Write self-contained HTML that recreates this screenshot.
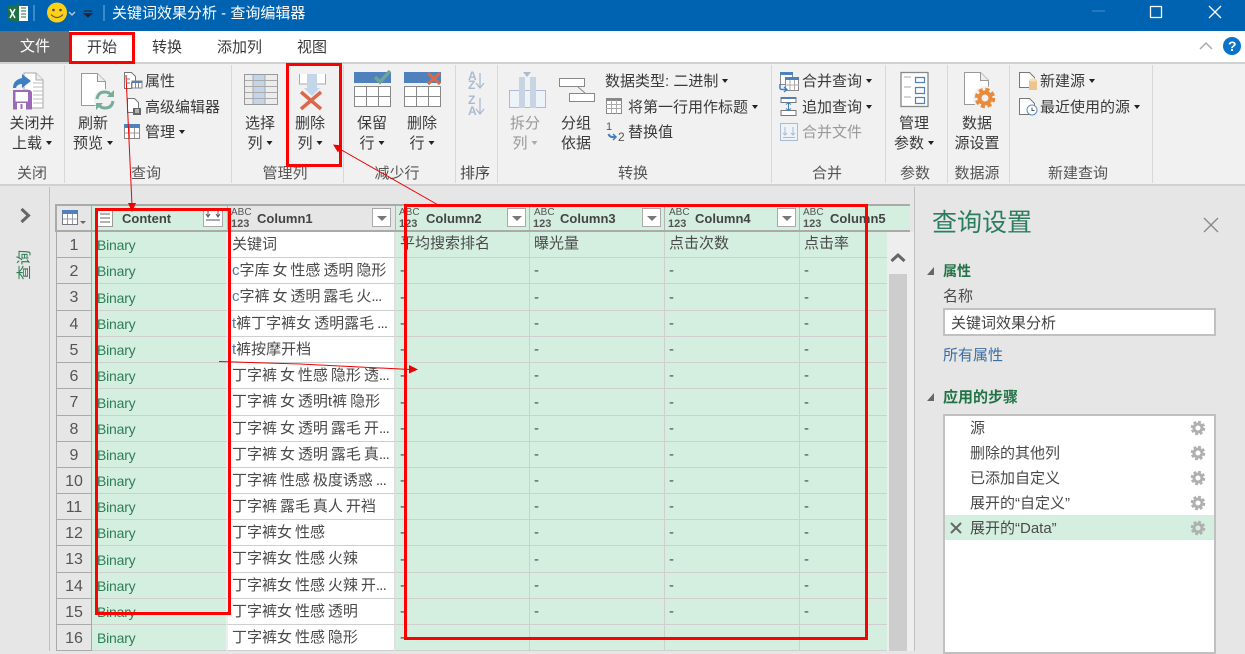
<!DOCTYPE html>
<html lang="zh"><head><meta charset="utf-8"><title>关键词效果分析 - 查询编辑器</title>
<style>
*{box-sizing:border-box}
html,body{margin:0;padding:0}
body{width:1245px;height:651px;overflow:hidden;position:relative;background:#e6e6e6;font-family:"Liberation Sans","Noto Sans CJK SC",sans-serif;font-size:15px;color:#444}
.a{position:absolute}
.t{position:absolute;line-height:20px;white-space:nowrap;color:#3a3a3a}
.c{transform:translateX(-50%)}
.t.g{color:#999}
.k{display:inline-block;width:0;height:0;border:3.5px solid transparent;border-top:4px solid #222;border-bottom:0;margin-left:4px;vertical-align:3px}
.g .k{border-top-color:#aaa}
table{position:absolute;left:56px;top:232px;width:831px;border-collapse:separate;border-spacing:0;table-layout:fixed;font-family:"Liberation Sans","Noto Sans CJK SC",sans-serif}
td{height:26px;padding:1px 0 0 4px;border-bottom:1px solid #cfcfcf;border-right:1px solid #cfcfcf;background:#d4efe0;white-space:nowrap;overflow:hidden;font-size:15px;color:#4a4a4a;line-height:20px}
tr.h td{height:27px}
td:nth-child(1){background:#e6e6e6;border:1px solid #aaa;border-top:0;text-align:center;padding:2px 0 0;color:#555;font-size:16px}
td:nth-child(2){color:#2f7d57;font-size:14px;letter-spacing:-.2px;padding:1px 0 0 5px;border-right:2px solid #eee}
td:nth-child(3){background:#fff;border-right:2px solid #e0e0e0;word-spacing:-1.2px;padding-top:0}
td:nth-child(7){border-right:0}
tr:first-child td:nth-child(n+4){padding-top:0;padding-bottom:2px}
i.e{font-style:normal;letter-spacing:-.8px}
b.b{font-weight:normal;color:#5577aa}
.hd{position:absolute;font:bold 13px "Liberation Sans",sans-serif;color:#444;top:211px;line-height:15px}
.abc{position:absolute;font:10px/10px "Liberation Sans",sans-serif;color:#555;top:208px}
.n123{position:absolute;font:bold 11px/11px "Liberation Sans",sans-serif;color:#555;top:219px}
.fb{position:absolute;top:208px;width:19px;height:19px;background:#fff;border:1px solid #aaa}
.fb:after{content:"";position:absolute;left:4px;top:7px;border:5px solid transparent;border-top:5px solid #777;border-bottom:0}
.sr{position:absolute;left:970px;line-height:20px;color:#4a4a4a;font-size:15px;white-space:nowrap}
</style></head><body>

<div class="a" style="left:0;top:0;width:1245px;height:31px;background:#0063b1"></div>
<div class="a" style="left:0;top:31px;width:1245px;height:31px;background:#fff"></div>
<div class="a" style="left:0;top:31px;width:69px;height:31px;background:#6d6d6d"></div>
<div class="a" style="left:0;top:62px;width:1245px;height:124px;background:#f1f1f1;border-top:2px solid #d0d0d0;border-bottom:2px solid #d0d0d0"></div>

<svg class="a" style="left:0;top:0" width="1245" height="651" viewBox="0 0 1245 651">
<defs>
<g id="gear"><circle r="4" fill="none" stroke="#b0b0b0" stroke-width="3"/><circle r="6" fill="none" stroke="#b0b0b0" stroke-width="2.6" stroke-dasharray="2.8 1.9"/></g>
</defs>
<!-- title bar -->
<path d="M8 6l12-2v18l-12-2z" fill="#1e7145"/><path d="M19 6h9v15h-9z" fill="#fff"/><path d="M21 8h5M21 11h5M21 14h5M21 17h5" stroke="#1e7145"/>
<path d="M10 9l5 9M15 9l-5 9" stroke="#fff" stroke-width="1.5"/>
<path d="M34 5v16M104 5v16" stroke="#7fb0d8"/>
<circle cx="57" cy="12.500" r="10" fill="#fcd116"/>
<circle cx="53.500" cy="10" r="1.300" fill="#544"/><circle cx="60.500" cy="10" r="1.300" fill="#544"/>
<path d="M51 14.500q6 6 12 0" fill="none" stroke="#654" stroke-width="1.200"/>
<path d="M69 12l3 3 3-3" fill="none" stroke="#bcd" stroke-width="1.300"/>
<path d="M84 11h8M84 13.500l4 3.500 4-3.500z" fill="#223" stroke="#223"/>
<path d="M1092 11h13" stroke="#4a8cc6"/>
<rect x="1150.500" y="6.500" width="11" height="11" fill="none" stroke="#fff" stroke-width="1.300"/>
<path d="M1209 6l12 12M1221 6l-12 12" stroke="#fff" stroke-width="1.300"/>
<path d="M1200 49l6-6 6 6" fill="none" stroke="#aaa" stroke-width="1.500"/>
<circle cx="1232" cy="46" r="9" fill="#0a72c9"/>

<!-- ribbon separators -->
<path d="M64.500 65v118M231.500 65v118M343.500 65v118M455.500 65v118M497.500 65v118M771.500 65v118M885.500 65v118M947.500 65v118M1009.500 65v118M1152.500 65v118" stroke="#d8d8d8"/>

<!-- close load -->
<path d="M24 73h12l7 7v28H28V90h-4z" fill="#fff" stroke="#aaa"/><path d="M36 73v7h7" fill="#eee" stroke="#aaa"/>
<path d="M33 83h10M33 87h10M33 91h10M33 95h10M33 99h10M33 103h10" stroke="#bbb"/>
<path d="M13 88q0-8 9-10v-4l9 7-9 7v-4q-5 0-6 4z" fill="#3f7fc1"/>
<path d="M13 90h17l2 2v17.500H13z" fill="#9a69b8"/><rect x="15.500" y="92" width="12.500" height="9.500" fill="#fff"/><rect x="17" y="103" width="9" height="6.500" fill="#fff"/><rect x="20.500" y="104" width="2" height="5" fill="#9a69b8"/>
<!-- refresh -->
<path d="M81.500 73.500h16l8 8v24h-24z" fill="#fff" stroke="#999"/><path d="M97.500 73.500v8h8" fill="#eee" stroke="#999"/>
<circle cx="105" cy="100" r="11" fill="#f1f1f1"/>
<path d="M97 99q1-7 8-7 4 0 6 3M113 101q-1 7-8 7-4 0-6-3" fill="none" stroke="#78ad9a" stroke-width="3"/>
<path d="M114 90v7h-7zM96 110v-7h7z" fill="#78ad9a"/>
<!-- props -->
<path d="M124.500 72.500h7l4 4v6h-4v6h-7z" fill="#fff" stroke="#777"/>
<path d="M127 79h3M127 83h3" stroke="#777"/>
<rect x="132" y="81" width="10" height="7" fill="#fff" stroke="#888"/><path d="M132 81h10v2h-10z" fill="#4f81bd"/><path d="M135.500 83v5M138.500 83v5" stroke="#888"/>
<path d="M127.500 98.500h7l4 4v10h-11z" fill="#fff" stroke="#777"/><rect x="133" y="108" width="8" height="7" fill="#666"/><path d="M135 110h4M135 112h4" stroke="#fff"/>
<rect x="124.500" y="124.500" width="15" height="14" fill="#fff" stroke="#888"/><rect x="124" y="124" width="16" height="4" fill="#4f81bd"/><path d="M129.500 128v10M134.500 128v10M125 133h14" stroke="#999"/>
<!-- select cols -->
<rect x="244.500" y="74.500" width="33" height="30" fill="#ececec" stroke="#999"/><rect x="253" y="75" width="12" height="29" fill="#c3d5e8"/>
<path d="M245 80.500h32M245 86.500h32M245 92.500h32M245 98.500h32M253 75v29M265 75v29" stroke="#aaa"/>
<!-- delete col -->
<path d="M299.500 74v10h26V74" fill="#fff" stroke="#aaa"/><path d="M307 74h10v16h-10z" fill="#c3d5e8"/><path d="M304 88h16l-8 8z" fill="#c3d5e8"/>
<path d="M301 92l20 17M321 92l-20 17" stroke="#d9694a" stroke-width="3.500"/>
<!-- keep rows -->
<rect x="354" y="72" width="37" height="11" fill="#4f81bd"/><rect x="354.500" y="86.500" width="36" height="20" fill="#fff" stroke="#888"/>
<path d="M354 96.500h37M366.500 86v21M378.500 86v21" stroke="#888"/>
<path d="M375 77l5 5 10-11" fill="none" stroke="#6fa397" stroke-width="3.500"/>
<!-- delete rows -->
<rect x="404" y="72" width="37" height="11" fill="#4f81bd"/><rect x="404.500" y="86.500" width="36" height="20" fill="#fff" stroke="#888"/>
<path d="M404 96.500h37M416.500 86v21M428.500 86v21" stroke="#888"/>
<path d="M428 73l12 11M440 73l-12 11" stroke="#d9694a" stroke-width="3"/>
<!-- split -->
<path d="M509.500 90.500v17h36v-17z" fill="#eef3fa" stroke="#a9bbd1"/><rect x="519" y="77" width="6" height="31" fill="#c8d4e4"/><rect x="530" y="77" width="6" height="31" fill="#c8d4e4"/><path d="M523 72h8l-4 5z" fill="#a9bbd1"/>
<!-- group -->
<rect x="559.500" y="78.500" width="25" height="8" fill="#fff" stroke="#888"/><rect x="569.500" y="93.500" width="25" height="8" fill="#fff" stroke="#888"/><path d="M578 87l7 6" stroke="#888"/>
<!-- first row -->
<rect x="606.500" y="98.500" width="15" height="15" fill="#fff" stroke="#888"/><rect x="606" y="98" width="16" height="3" fill="#888"/>
<path d="M606 104.500h16M606 108.500h16M611.500 100v14M616.500 100v14" stroke="#aaa"/>
<path d="M608.500 134q1 3 4 3h3" fill="none" stroke="#3f7fc1" stroke-width="2"/><path d="M613 134l3 3-3 3" fill="none" stroke="#3f7fc1" stroke-width="1.500"/>
<!-- merge -->
<rect x="780.500" y="72.500" width="12" height="12" fill="#fff" stroke="#888"/><rect x="780" y="72" width="13" height="3" fill="#4f81bd"/>
<rect x="785.500" y="78.500" width="13" height="12" fill="#fff" stroke="#888"/><rect x="785" y="77" width="14" height="3" fill="#4f81bd"/><path d="M790 80v10M794.500 80v10M785 85h14" stroke="#aaa"/>
<path d="M780 84v4q0 1.500 3 1.500h3" fill="none" stroke="#3f7fc1" stroke-width="1.500"/><path d="M784 87l3 2.500-3 2.500" fill="none" stroke="#3f7fc1" stroke-width="1.300"/>
<path d="M781 97.500h15v5h-15zM781 110.500h15v5h-15z" fill="#fff" stroke="#777"/><path d="M781 97h15v2h-15z" fill="#4f81bd"/><path d="M788.500 103v7M786 104.500l2.500-2 2.500 2M786 108.500l2.500 2 2.500-2" fill="none" stroke="#3f7fc1"/>
<rect x="780.500" y="123.500" width="17" height="17" fill="#eef3fa" stroke="#a9bbd1"/><path d="M785 127v8M783 133l2 2 2-2M793 127v8M791 133l2 2 2-2M783 137.500h12" fill="none" stroke="#a9bbd1"/>
<!-- params -->
<rect x="901" y="72.500" width="27" height="34" fill="#fff" stroke="#888" stroke-width="1.300"/>
<path d="M904 77h7M904 87h7M904 97h7" stroke="#aaa"/>
<path d="M915.500 77.500h9v5h-9zM915.500 87.500h9v6h-9zM915.500 97.500h9v6h-9z" fill="#fff" stroke="#4f81bd" stroke-width="1.200"/>
<!-- data source -->
<path d="M964.500 72.500h16l8 8v24h-24z" fill="#fff" stroke="#999"/><path d="M980.500 72.500v8h8" fill="#eee" stroke="#999"/>
<circle cx="985" cy="98" r="12" fill="#f1f1f1"/>
<circle cx="985" cy="98" r="5.500" fill="none" stroke="#e88a3a" stroke-width="4"/><circle cx="985" cy="98" r="8.500" fill="none" stroke="#e88a3a" stroke-width="3.500" stroke-dasharray="4 2.700"/>
<!-- new src -->
<path d="M1019.500 72.500h10l5 5v10h-15z" fill="#fff" stroke="#777"/>
<rect x="1029" y="80" width="8" height="10" fill="#e8c68e"/><ellipse cx="1033" cy="80" rx="4" ry="1.800" fill="#f4dfb8"/>
<path d="M1019.500 98.500h10l5 5v11h-15z" fill="#fff" stroke="#777"/>
<circle cx="1032" cy="110" r="5" fill="#fff" stroke="#5a8fc4"/><path d="M1032 107.500v3h2.500" fill="none" stroke="#555"/>

<!-- left panel -->
<path d="M49.500 187v464" stroke="#c0c0c0"/>
<path d="M21.500 209l7 6.500-7 6.500" fill="none" stroke="#666" stroke-width="3"/>
<!-- right panel border -->
<path d="M914.500 187v464" stroke="#c0c0c0"/>
<path d="M1204 218l14 14M1218 218l-14 14" stroke="#888" stroke-width="1.300"/>
<path d="M934 267v8h-7z" fill="#666"/><path d="M934 393v8h-7z" fill="#666"/>
</svg>

<div class="t" style="left:112px;top:4px;color:#fff">关键词效果分析 - 查询编辑器</div>
<div class="t" style="left:20px;top:37px;color:#fff">文件</div>
<div class="t" style="left:87px;top:38px">开始</div>
<div class="t" style="left:152px;top:38px">转换</div>
<div class="t" style="left:217px;top:38px">添加列</div>
<div class="t" style="left:297px;top:38px">视图</div>
<div class="t" style="left:1228px;top:36px;color:#fff;font-weight:bold;font-size:14px">?</div>

<div class="t c" style="left:32px;top:114px">关闭并</div><div class="t c" style="left:32px;top:134px">上载<i class="k"></i></div><div class="t c" style="left:32px;top:164px;color:#555">关闭</div>
<div class="t c" style="left:93px;top:114px">刷新</div><div class="t c" style="left:93px;top:134px">预览<i class="k"></i></div>
<div class="t" style="left:145px;top:72px">属性</div><div class="t" style="left:145px;top:98px">高级编辑器</div><div class="t" style="left:145px;top:123px">管理<i class="k"></i></div><div class="t c" style="left:146px;top:164px;color:#555">查询</div>
<div class="t c" style="left:260px;top:114px">选择</div><div class="t c" style="left:260px;top:134px">列<i class="k"></i></div><div class="t c" style="left:285px;top:164px;color:#555">管理列</div>
<div class="t c" style="left:310px;top:114px">删除</div><div class="t c" style="left:310px;top:134px">列<i class="k"></i></div>
<div class="t c" style="left:372px;top:114px">保留</div><div class="t c" style="left:372px;top:134px">行<i class="k"></i></div>
<div class="t c" style="left:422px;top:114px">删除</div><div class="t c" style="left:422px;top:134px">行<i class="k"></i></div><div class="t c" style="left:397px;top:164px;color:#555">减少行</div>
<div class="t" style="left:468px;top:72px;font:bold 12px/9px 'Liberation Sans',sans-serif;color:#a9bbd1;white-space:normal;width:10px">A<br>Z</div>
<div class="t" style="left:468px;top:95px;font:bold 12px/11px 'Liberation Sans',sans-serif;color:#a9bbd1;white-space:normal;width:10px">Z<br>A</div>
<svg class="a" style="left:474px;top:70px" width="12" height="46"><path d="M6 3v15M2 13l4 5 4-5M6 28v16M2 39l4 5 4-5" fill="none" stroke="#a9bbd1" stroke-width="1.300"/></svg>
<div class="t c" style="left:475px;top:164px;color:#444">排序</div>
<div class="t c g" style="left:525px;top:114px">拆分</div><div class="t c g" style="left:525px;top:134px">列<i class="k"></i></div>
<div class="t c" style="left:576px;top:114px">分组</div><div class="t c" style="left:576px;top:134px">依据</div>
<div class="t" style="left:605px;top:72px">数据类型: 二进制<i class="k"></i></div>
<div class="t" style="left:628px;top:98px">将第一行用作标题<i class="k"></i></div>
<div class="t" style="left:628px;top:123px">替换值</div>
<div class="t" style="left:606px;top:120px;font-size:11px;line-height:14px;color:#555">1</div><div class="t" style="left:618px;top:130px;font-size:12px;line-height:14px;color:#555">2</div>
<div class="t c" style="left:633px;top:164px;color:#555">转换</div>
<div class="t" style="left:802px;top:72px">合并查询<i class="k"></i></div><div class="t" style="left:802px;top:98px">追加查询<i class="k"></i></div><div class="t g" style="left:802px;top:123px">合并文件</div><div class="t c" style="left:827px;top:164px;color:#555">合并</div>
<div class="t c" style="left:914px;top:114px">管理</div><div class="t c" style="left:914px;top:134px">参数<i class="k"></i></div><div class="t c" style="left:915px;top:164px;color:#555">参数</div>
<div class="t c" style="left:977px;top:114px">数据</div><div class="t c" style="left:977px;top:134px">源设置</div><div class="t c" style="left:977px;top:164px;color:#555">数据源</div>
<div class="t" style="left:1040px;top:72px">新建源<i class="k"></i></div><div class="t" style="left:1040px;top:98px">最近使用的源<i class="k"></i></div><div class="t c" style="left:1078px;top:164px;color:#555">新建查询</div>

<div class="t" style="left:10px;top:255px;width:30px;height:20px;text-align:center;transform:rotate(-90deg);color:#2f7d57;font-size:15px">查询</div>

<!-- table header -->
<div class="a" style="left:55px;top:204px;width:855px;height:28px;background:#d4efe0;border-top:2px solid #aaa;border-bottom:2px solid #aaa"></div>
<div class="a" style="left:55px;top:204px;width:37px;height:28px;background:#e6e6e6;border:2px solid #aaa;border-right:1px solid #aaa"></div>
<div class="a" style="left:227px;top:206px;width:169px;height:24px;background:#e6e6e6"></div>
<svg class="a" style="left:0;top:200px" width="910" height="34">
<rect x="62.500" y="10.500" width="15" height="14" fill="#fff" stroke="#778"/><rect x="62" y="10" width="16" height="4" fill="#4f81bd"/><path d="M67.500 14v10M72.500 14v10M63 19h14" stroke="#99a"/><path d="M80 21h6l-3 3z" fill="#666"/>
<rect x="97.500" y="9.500" width="15" height="17" fill="#fff" stroke="#999"/><path d="M100 14h10M100 18h10M100 22h10" stroke="#666"/>
<rect x="203.500" y="8.500" width="19" height="18" fill="#fff" stroke="#aaa"/><path d="M208 10v6M206 14l2 3 2-3M218 10v6M216 14l2 3 2-3M206 20h14" stroke="#555" fill="none"/>
<path d="M227.500 6v24M395.500 6v24M529.500 6v24M664.500 6v24M799.500 6v24" stroke="#b5b5b5"/>
</svg>
<div class="hd" style="left:122px">Content</div>
<div class="abc" style="left:231px">ABC</div><div class="n123" style="left:231px">123</div><div class="hd" style="left:257px">Column1</div><div class="fb" style="left:372px"></div>
<div class="abc" style="left:399px">ABC</div><div class="n123" style="left:399px">123</div><div class="hd" style="left:426px">Column2</div><div class="fb" style="left:507px"></div>
<div class="abc" style="left:534px">ABC</div><div class="n123" style="left:533px">123</div><div class="hd" style="left:560px">Column3</div><div class="fb" style="left:642px"></div>
<div class="abc" style="left:669px">ABC</div><div class="n123" style="left:668px">123</div><div class="hd" style="left:695px">Column4</div><div class="fb" style="left:777px"></div>
<div class="abc" style="left:803px">ABC</div><div class="n123" style="left:803px">123</div><div class="hd" style="left:830px">Column5</div>

<table><colgroup><col style="width:36px"><col style="width:136px"><col style="width:168px"><col style="width:134px"><col style="width:135px"><col style="width:135px"><col style="width:87px"></colgroup>
<tr><td>1</td><td>Binary</td><td>关键词</td><td>平均搜索排名</td><td>曝光量</td><td>点击次数</td><td>点击率</td></tr>
<tr><td>2</td><td>Binary</td><td><b class="b">c</b>字库 女 性感 透明 隐形</td><td>-</td><td>-</td><td>-</td><td>-</td></tr>
<tr class="h"><td>3</td><td>Binary</td><td><b class="b">c</b>字裤 女 透明 露毛 火<i class="e">...</i></td><td>-</td><td>-</td><td>-</td><td>-</td></tr>
<tr><td>4</td><td>Binary</td><td><b class="b">t</b>裤丁字裤女 透明露毛 <i class="e">...</i></td><td>-</td><td>-</td><td>-</td><td>-</td></tr>
<tr><td>5</td><td>Binary</td><td><b class="b">t</b>裤按摩开档</td><td>-</td><td>-</td><td>-</td><td>-</td></tr>
<tr><td>6</td><td>Binary</td><td>丁字裤 女 性感 隐形 透<i class="e">...</i></td><td>-</td><td>-</td><td>-</td><td>-</td></tr>
<tr class="h"><td>7</td><td>Binary</td><td>丁字裤 女 透明t裤 隐形</td><td>-</td><td>-</td><td>-</td><td>-</td></tr>
<tr><td>8</td><td>Binary</td><td>丁字裤 女 透明 露毛 开<i class="e">...</i></td><td>-</td><td>-</td><td>-</td><td>-</td></tr>
<tr><td>9</td><td>Binary</td><td>丁字裤 女 透明 露毛 真<i class="e">...</i></td><td>-</td><td>-</td><td>-</td><td>-</td></tr>
<tr><td>10</td><td>Binary</td><td>丁字裤 性感 极度诱惑 <i class="e">...</i></td><td>-</td><td>-</td><td>-</td><td>-</td></tr>
<tr><td>11</td><td>Binary</td><td>丁字裤 露毛 真人 开裆</td><td>-</td><td>-</td><td>-</td><td>-</td></tr>
<tr><td>12</td><td>Binary</td><td>丁字裤女 性感</td><td>-</td><td>-</td><td>-</td><td>-</td></tr>
<tr class="h"><td>13</td><td>Binary</td><td>丁字裤女 性感 火辣</td><td>-</td><td>-</td><td>-</td><td>-</td></tr>
<tr><td>14</td><td>Binary</td><td>丁字裤女 性感 火辣 开<i class="e">...</i></td><td>-</td><td>-</td><td>-</td><td>-</td></tr>
<tr><td>15</td><td>Binary</td><td>丁字裤女 性感 透明</td><td>-</td><td>-</td><td>-</td><td>-</td></tr>
<tr><td>16</td><td>Binary</td><td>丁字裤女 性感 隐形</td><td>-</td><td>-</td><td>-</td><td>-</td></tr>
</table>

<!-- scrollbar -->
<div class="a" style="left:887px;top:232px;width:27px;height:419px;background:#eee"></div>
<div class="a" style="left:889px;top:274px;width:18px;height:377px;background:#cdcdcd"></div>
<svg class="a" style="left:889px;top:250px" width="18" height="16"><path d="M2.500 11l6.500-6 6.500 6" fill="none" stroke="#666" stroke-width="3"/></svg>

<!-- right panel -->
<div class="t" style="left:932px;top:207px;font-size:25px;line-height:32px;color:#2a7d5f">查询设置</div>
<div class="t" style="left:943px;top:261px;color:#217346;font-weight:bold;font-size:14px">属性</div>
<div class="t" style="left:943px;top:287px;color:#4a4a4a">名称</div>
<div class="a" style="left:943px;top:308px;width:273px;height:28px;background:#fff;border:2px solid #c0c0c0"></div>
<div class="t" style="left:951px;top:314px;color:#444;font-size:15px">关键词效果分析</div>
<div class="t" style="left:943px;top:346px;color:#3a6ea5">所有属性</div>
<div class="t" style="left:943px;top:388px;color:#217346;font-weight:bold;font-size:15px">应用的步骤</div>
<div class="a" style="left:943px;top:414px;width:273px;height:240px;background:#fff;border:2px solid #c0c0c0"></div>
<div class="a" style="left:945px;top:515px;width:269px;height:25px;background:#d4efe0"></div>
<div class="sr" style="top:419px">源</div>
<div class="sr" style="top:444px">删除的其他列</div>
<div class="sr" style="top:469px">已添加自定义</div>
<div class="sr" style="top:494px">展开的“自定义”</div>
<div class="sr" style="top:519px">展开的“Data”</div>
<svg class="a" style="left:943px;top:414px" width="273" height="130">
<use href="#gear" x="255" y="14"/><use href="#gear" x="255" y="39"/><use href="#gear" x="255" y="64"/><use href="#gear" x="255" y="89"/><use href="#gear" x="255" y="114"/>
<path d="M8 109l10 10M18 109l-10 10" stroke="#666" stroke-width="2"/>
</svg>

<!-- annotations -->
<svg class="a" style="left:0;top:0" width="1245" height="651">
<g fill="none" stroke="#f00" stroke-width="3">
<rect x="70.500" y="33.500" width="63" height="29"/>
<rect x="287.500" y="64.500" width="53" height="101"/>
<rect x="96.500" y="209.500" width="133" height="404"/>
<rect x="405.500" y="205.500" width="461" height="433"/>
</g>
<g fill="none" stroke="#e00" stroke-width="1">
<path d="M126 75L132 205"/>
<path d="M219 361.500L300 364L410 369.500"/>
<path d="M440 206L338 148"/>
</g>
<g fill="#e00">
<path d="M128 203h8l-4 9z"/>
<path d="M409 365l9 4.500-9 4z"/>
<path d="M333 144.500l9 1-4 7z"/>
</g>
</svg>
</body></html>
